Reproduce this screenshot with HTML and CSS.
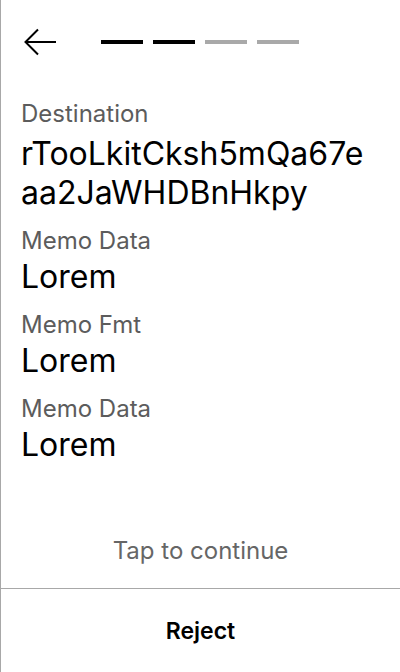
FILE: index.html
```html
<!DOCTYPE html>
<html>
<head>
<meta charset="utf-8">
<link rel="stylesheet" href="styles.css">
</head>
<body>
<div class="screen">
  <header class="top">
    <button class="back" aria-label="Back">
      <svg width="34" height="28" viewBox="0 0 34 28"><path d="M14 1.5 L1.5 14 L14 26.5 M1.5 14 H32" fill="none" stroke="#000" stroke-width="2"/></svg>
    </button>
    <div class="steps">
      <span class="step done"></span>
      <span class="step done"></span>
      <span class="step"></span>
      <span class="step"></span>
    </div>
  </header>
  <main class="fields">
    <div class="field">
      <div class="label">Destination</div>
      <div class="value addr">rTooLkitCksh5mQa67eaa2JaWHDBnHkpy</div>
    </div>
    <div class="field">
      <div class="label">Memo Data</div>
      <div class="value">Lorem</div>
    </div>
    <div class="field">
      <div class="label">Memo Fmt</div>
      <div class="value">Lorem</div>
    </div>
    <div class="field">
      <div class="label">Memo Data</div>
      <div class="value">Lorem</div>
    </div>
  </main>
  <div class="tap">Tap to continue</div>
  <footer class="footer">
    <button class="reject">Reject</button>
  </footer>
</div>
</body>
</html>
```
FILE: styles.css
```css
html, body { margin: 0; padding: 0; background: #fff; }
body { font-family: Inter, "Noto Sans", sans-serif; color: #000; }
.screen {
  width: 400px; height: 672px; box-sizing: border-box;
  border-left: 1px solid #a8a8a8;
  display: flex; flex-direction: column;
}
.top { display: flex; align-items: center; height: 84px; padding: 0 0 0 23px; }
.back { background: none; border: 0; padding: 0; width: 34px; height: 28px; display: block; }
.back svg { display: block; }
.steps { display: flex; gap: 10px; margin-left: 43px; }
.step { width: 42px; height: 4px; background: #a9a9a9; display: block; }
.step.done { background: #000; }
.fields { padding: 16px 19px 0 20px; display: flex; flex-direction: column; gap: 15px; }
.label { font-size: 24px; line-height: 28px; color: #5c5c5c; }
.value { font-size: 32px; line-height: 39px; padding-top: 2px; }
.addr { word-break: break-all; margin-top: 4px; }
.tap { margin-top: auto; text-align: center; font-size: 24px; line-height: 28px; color: #666; padding-bottom: 23px; }
.footer { border-top: 1px solid #a8a8a8; height: 83px; display: flex; align-items: center; justify-content: center; }
.reject { background: none; border: 0; padding: 0; font-family: inherit; font-size: 23px; font-weight: 600; color: #000; }
```
